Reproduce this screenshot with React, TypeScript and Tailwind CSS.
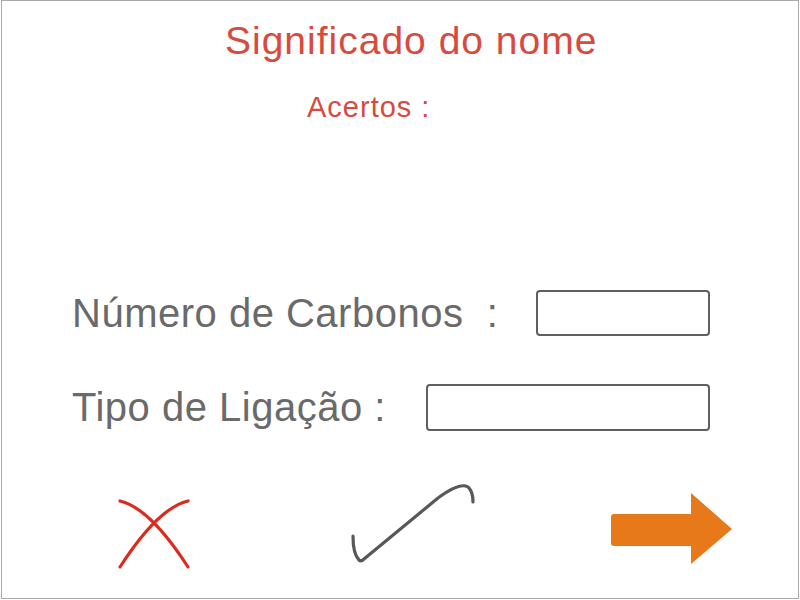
import React from "react"

function CrossIcon() {
  return (
    <svg width="80" height="75" viewBox="115 498 80 75" className="mt-[12px] shrink-0">
      <path d="M120 503 Q150 510 188 569" fill="none" stroke="#dc2a1e" strokeWidth="3.2" strokeLinecap="round" />
      <path d="M188 503 Q158 510 120 569" fill="none" stroke="#dc2a1e" strokeWidth="3.2" strokeLinecap="round" />
    </svg>
  )
}

function CheckIcon() {
  return (
    <svg width="130" height="82" viewBox="348 486 130 82" className="ml-[153px] shrink-0">
      <path
        d="M353 538 Q353 556 359 562 Q361 564 364 561 L438 500 Q460 484 468 489 Q473 493 473 504"
        fill="none"
        stroke="#585858"
        strokeWidth="3.2"
        strokeLinecap="round"
        strokeLinejoin="round"
      />
    </svg>
  )
}

function ArrowIcon() {
  return (
    <svg width="128" height="78" viewBox="606 492 128 78" className="ml-[128px] mt-[6px] shrink-0">
      <path
        d="M614 516 L691 516 L691 495 L732 531 L691 566 L691 548 L614 548 Q611 548 611 545 L611 519 Q611 516 614 516 Z"
        fill="#e8791a"
      />
    </svg>
  )
}

export default function App() {
  return (
    <div className="w-[800px] h-[600px] bg-white font-['Liberation_Sans',Arial,sans-serif]">
      <div className="ml-[1px] w-[798px] h-[599px] border border-[#a8a8a8] flex flex-col">
        {/* Header */}
        <h1 className="pt-[20px] pl-[223px] text-[39px] leading-none tracking-[1px] text-[#d84a3e] whitespace-pre">
          Significado do nome
        </h1>
        <p className="mt-[33px] pl-[305px] text-[29px] leading-none tracking-[1px] text-[#d84a3e] whitespace-pre">
          Acertos :
        </p>

        {/* Form rows */}
        <div className="mt-[168px] pl-[70px] pr-[88px] flex items-start justify-between">
          <span className="mt-[3px] text-[40px] leading-none tracking-[0.5px] text-[#6a6a6a] whitespace-pre">
            Número de Carbonos  :
          </span>
          <input
            type="text"
            className="w-[174px] h-[46px] bg-white border-2 border-[#5f5f5f] rounded-[4px] outline-none"
          />
        </div>

        <div className="mt-[48px] pl-[70px] pr-[88px] flex items-start justify-between">
          <span className="mt-[3px] text-[40px] leading-none tracking-[0.5px] text-[#6a6a6a] whitespace-pre">
            Tipo de Ligação :
          </span>
          <input
            type="text"
            className="w-[284px] h-[47px] bg-white border-2 border-[#5f5f5f] rounded-[4px] outline-none"
          />
        </div>

        {/* Actions */}
        <div className="mt-[53px] pl-[113px] flex items-start">
          <CrossIcon />
          <CheckIcon />
          <ArrowIcon />
        </div>
      </div>
    </div>
  )
}
